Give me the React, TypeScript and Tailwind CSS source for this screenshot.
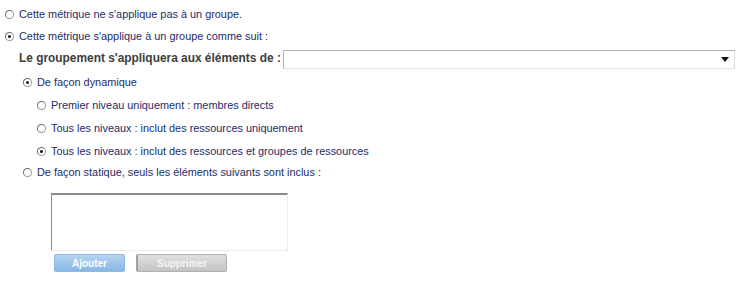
function Radio({ checked }: { checked?: boolean }) {
  return (
    <span className="w-[9px] h-[9px] rounded-full border border-[#9a9a9a] border-t-[#6f6f6f] border-l-[#6f6f6f] bg-white flex items-center justify-center flex-shrink-0">
      {checked && <span className="w-[3px] h-[3px] rounded-full bg-[#111]" />}
    </span>
  );
}

function Option({ checked, label, cls }: { checked?: boolean; label: string; cls: string }) {
  return (
    <div className={`flex items-center gap-[5px] ${cls}`}>
      <Radio checked={checked} />
      <span className="text-[#232c6a]">{label}</span>
    </div>
  );
}

export default function App() {
  return (
    <div
      className="w-[741px] h-[293px] bg-white text-[10.9px] pt-[3px]"
      style={{ fontFamily: '"Liberation Sans", Arial, sans-serif' }}
    >
      <Option cls="pl-[5px] h-[22px]" label="Cette métrique ne s'applique pas à un groupe." />
      <Option cls="pl-[5px] h-[22px]" checked label="Cette métrique s'applique à un groupe comme suit :" />
      <div className="flex items-center h-[24px] pl-[19px] gap-[2px]">
        <span className="font-bold text-[#404040] text-[11.9px]">Le groupement s'appliquera aux éléments de :</span>
        <div className="flex-1 mr-[6px] h-[19px] border border-[#b4b4b4] border-b-[#e2e8ef] border-r-[#d8dde3] bg-white flex items-center justify-end pr-[5px]">
          <svg width="8" height="5" viewBox="0 0 8 5">
            <path d="M0 0h8L4 5z" fill="#111" />
          </svg>
        </div>
      </div>
      <Option cls="pl-[23px] h-[23px]" checked label="De façon dynamique" />
      <Option cls="pl-[37px] h-[23px]" label="Premier niveau uniquement : membres directs" />
      <Option cls="pl-[37px] h-[23px]" label="Tous les niveaux : inclut des ressources uniquement" />
      <Option cls="pl-[37px] h-[22px]" checked label="Tous les niveaux : inclut des ressources et groupes de ressources" />
      <Option cls="pl-[23px] h-[20px]" label="De façon statique, seuls les éléments suivants sont inclus :" />
      <div className="pl-[51px] pt-[11px]">
        <div className="w-[237px] h-[58px] border border-[#ececec] border-t-2 border-t-[#8c8c8c] border-l-[#8c8c8c] bg-white" />
        <div className="flex gap-[11px] pl-[3px] pt-[3px]">
          <div className="w-[71px] h-[18px] rounded-[2px] bg-gradient-to-b from-[#b6d4f1] to-[#86b7e6] border border-[#8fb9e3] flex items-center justify-center text-white font-bold text-[10px]">
            Ajouter
          </div>
          <div className="w-[91px] h-[18px] rounded-[2px] bg-gradient-to-b from-[#e0e0e0] to-[#c4c4c4] border border-[#b0b0b0] border-l-2 border-l-[#a0a0a0] flex items-center justify-center text-[#f4f4f4] font-bold text-[10px]">
            Supprimer
          </div>
        </div>
      </div>
    </div>
  );
}
